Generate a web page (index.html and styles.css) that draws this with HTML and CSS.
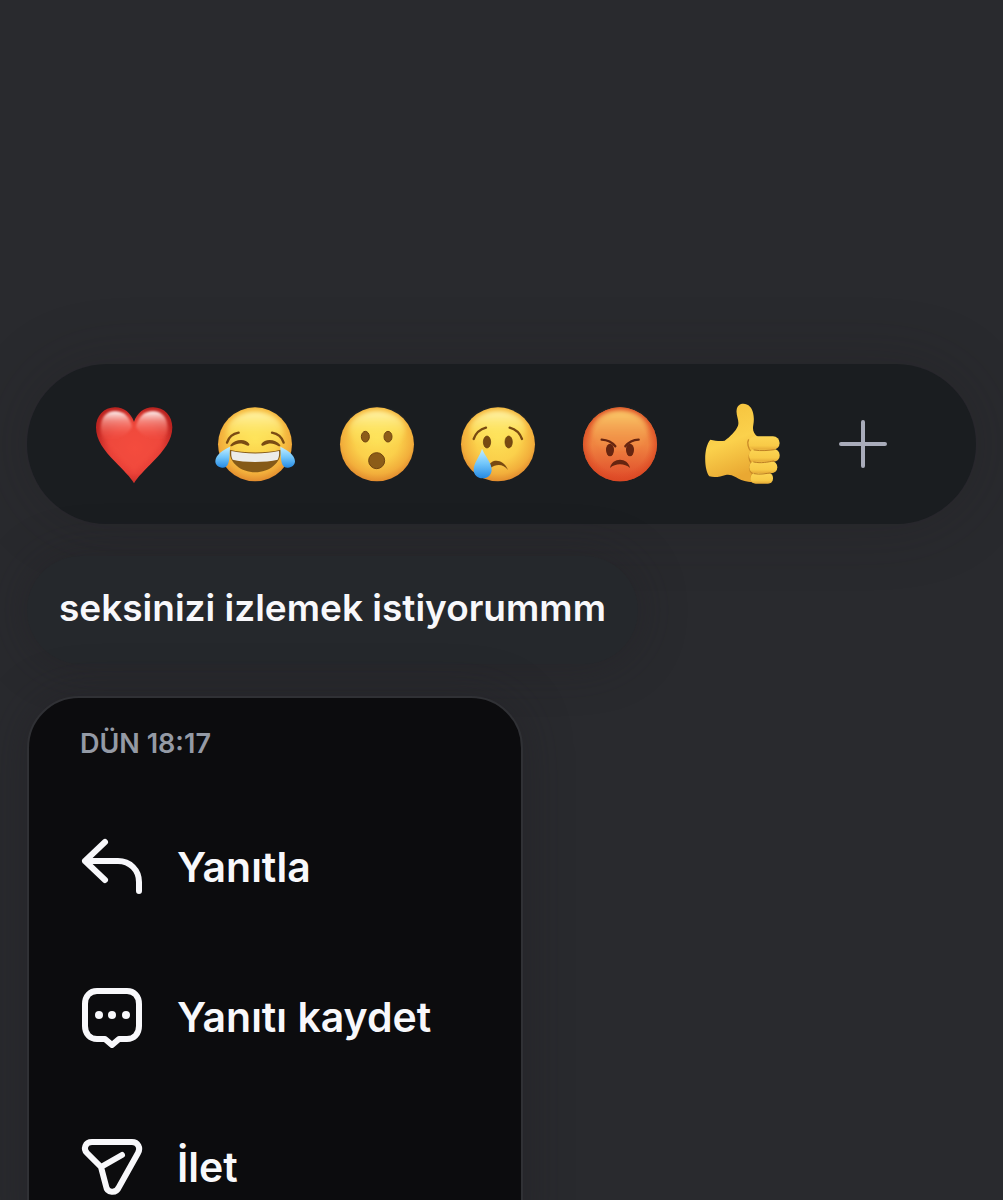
FILE: index.html
```html
<!DOCTYPE html>
<html lang="tr">
<head>
<meta charset="utf-8">
<meta name="viewport" content="width=device-width, initial-scale=1">
<title>Mesaj</title>
<link rel="stylesheet" href="styles.css">
</head>
<body>
<main class="overlay">
  <div class="reactions" role="toolbar" aria-label="Tepkiler">
    <button class="reaction" type="button" aria-label="Kalp">
      <svg class="emoji" viewBox="36 36 252 252" aria-hidden="true">
        <defs>
          <radialGradient id="heart" gradientUnits="userSpaceOnUse" cx="165" cy="175" r="125">
            <stop offset="0" stop-color="#f5493c"/><stop offset=".6" stop-color="#e94138"/><stop offset="1" stop-color="#ba2320"/>
          </radialGradient>
          <linearGradient id="gloss" x1="0" y1="0" x2="0" y2="1">
            <stop offset="0" stop-color="#fff" stop-opacity=".95"/><stop offset=".35" stop-color="#ffc4bc" stop-opacity=".5"/><stop offset="1" stop-color="#f5584c" stop-opacity="0"/>
          </linearGradient>
          <filter id="soft" x="-20%" y="-20%" width="140%" height="140%"><feGaussianBlur stdDeviation="3"/></filter>
          <filter id="softer" x="-20%" y="-20%" width="140%" height="140%"><feGaussianBlur stdDeviation="6"/></filter>
        </defs>
        <path d="M162 280C153 263 129 240 104 214C72 181 48 151 48 112C48 78 72 52 105 52C132 52 152 68 162 96C172 68 192 52 219 52C253 52 277 78 277 112C277 151 252 181 220 214C195 240 171 263 162 280Z" fill="url(#heart)"/>
        <path d="M162 250C140 225 62 165 60 112C60 82 80 64 106 64C134 64 152 84 162 108C172 84 190 64 218 64C244 64 264 82 264 112C262 165 184 225 162 250Z" fill="#f4503f" opacity=".55" filter="url(#softer)"/>
        <path d="M156 110C148 78 130 64 105 64C80 64 63 82 63 112C63 130 68 144 76 150C108 150 140 140 156 110Z" fill="url(#gloss)" filter="url(#soft)"/>
        <path d="M168 110C176 78 194 64 219 64C244 64 262 82 262 112C262 130 256 144 248 150C216 150 184 140 168 110Z" fill="url(#gloss)" filter="url(#soft)"/>
      </svg>
    </button>
    <button class="reaction" type="button" aria-label="Gülme">
      <svg class="emoji" viewBox="400 36 252 252" aria-hidden="true">
        <defs>
          <radialGradient id="face" cx=".5" cy=".42" r=".6">
            <stop offset="0" stop-color="#fddf55"/><stop offset=".5" stop-color="#fbd04b"/><stop offset=".8" stop-color="#f2ae3b"/><stop offset="1" stop-color="#de842b"/>
          </radialGradient>
          <linearGradient id="shine" x1="0" y1="0" x2="0" y2="1">
            <stop offset="0" stop-color="#fff6b4" stop-opacity=".9"/><stop offset=".6" stop-color="#fff06a" stop-opacity=".35"/><stop offset="1" stop-color="#fff06a" stop-opacity="0"/>
          </linearGradient>
          <linearGradient id="tear" x1="0" y1="0" x2="0" y2="1">
            <stop offset="0" stop-color="#c5efff"/><stop offset=".5" stop-color="#72c6fa"/><stop offset="1" stop-color="#268ae4"/>
          </linearGradient>
        </defs>
        <circle cx="526" cy="163" r="111" fill="url(#face)"/>
        <ellipse cx="526" cy="124" rx="84" ry="58" fill="url(#shine)" filter="url(#softer)"/>
        <g fill="none" stroke="#7a4b13" stroke-linecap="round">
          <path d="M442 158C447 142 460 131 477 128" stroke-width="7"/>
          <path d="M612 158C607 142 594 131 577 128" stroke-width="7"/>
        </g>
        <path d="M453 164C465 148 498 144 509 162C510 167 505 169 500 166C486 158 472 159 458 168C454 170 450 168 453 164Z" fill="#7a4b13"/>
        <path d="M601 164C589 148 556 144 545 162C544 167 549 169 554 166C568 158 582 159 596 168C600 170 604 168 601 164Z" fill="#7a4b13"/>
        <path d="M450 179C492 190 562 190 603 179C607 215 572 247 527 247C481 247 446 215 450 179Z" fill="#855a18"/>
        <path d="M455 183C496 193 557 193 598 183C599 195 598 202 594 209C558 218 494 218 459 209C455 202 454 195 455 183Z" fill="#ececea"/>
        <path d="M451 170C431 180 407 194 407 214C407 225 417 234 430 233C452 232 449 199 451 170Z" fill="url(#tear)"/>
        <path d="M602 170C622 180 646 194 646 214C646 225 636 234 623 233C601 232 604 199 602 170Z" fill="url(#tear)"/>
      </svg>
    </button>
    <button class="reaction" type="button" aria-label="Şaşırma">
      <svg class="emoji" viewBox="45 36 252 252" aria-hidden="true">
        <circle cx="171" cy="163" r="111" fill="url(#face)"/>
        <ellipse cx="171" cy="120" rx="84" ry="56" fill="url(#shine)" filter="url(#softer)"/>
        <g fill="#8c5c18" stroke="#704410" stroke-width="3">
          <ellipse cx="136" cy="140" rx="12" ry="16"/>
          <ellipse cx="204" cy="140" rx="12" ry="16"/>
          <circle cx="170" cy="212" r="24"/>
        </g>
      </svg>
    </button>
    <button class="reaction" type="button" aria-label="Üzülme">
      <svg class="emoji" viewBox="409 36 252 252" aria-hidden="true">
        <circle cx="535" cy="163" r="111" fill="url(#face)"/>
        <ellipse cx="535" cy="120" rx="84" ry="56" fill="url(#shine)" filter="url(#softer)"/>
        <g fill="#784911" stroke="#61380c" stroke-width="2">
          <ellipse cx="502" cy="156" rx="11" ry="18"/>
          <ellipse cx="567" cy="156" rx="11" ry="18"/>
        </g>
        <g fill="none" stroke="#784911" stroke-width="7" stroke-linecap="round">
          <path d="M462 147C468 130 480 118 499 113"/>
          <path d="M607 147C601 130 589 118 570 113"/>
        </g>
        <path d="M507 229C514 206 551 205 565 240C550 221 530 222 512 234Z" fill="#784911"/>
        <path d="M487 176C496 199 516 217 516 239C516 254 504 265 489 265C474 265 462 254 462 239C462 217 481 199 487 176Z" fill="url(#tear)"/>
      </svg>
    </button>
    <button class="reaction" type="button" aria-label="Kızma">
      <svg class="emoji" viewBox="24 36 252 252" aria-hidden="true">
        <defs>
          <linearGradient id="angry" x1="0" y1="0" x2="0" y2="1">
            <stop offset="0" stop-color="#ef8540"/><stop offset=".5" stop-color="#ef8441"/><stop offset="1" stop-color="#df4929"/>
          </linearGradient>
          <radialGradient id="angry-edge">
            <stop offset=".75" stop-color="#e14c26" stop-opacity="0"/><stop offset="1" stop-color="#d94822" stop-opacity=".8"/>
          </radialGradient>
          <linearGradient id="angry-shine" x1="0" y1="0" x2="0" y2="1">
            <stop offset="0" stop-color="#fbd06d" stop-opacity=".95"/><stop offset="1" stop-color="#f4a24c" stop-opacity="0"/>
          </linearGradient>
        </defs>
        <circle cx="150" cy="163" r="111" fill="url(#angry)"/>
        <circle cx="150" cy="163" r="111" fill="url(#angry-edge)"/>
        <ellipse cx="150" cy="124" rx="84" ry="62" fill="url(#angry-shine)" filter="url(#softer)"/>
        <g fill="#662510">
          <ellipse cx="120" cy="180" rx="12" ry="19"/>
          <ellipse cx="180" cy="180" rx="12" ry="19"/>
          <path d="M120 234C126 201 174 201 180 234C164 219 136 219 120 234Z"/>
        </g>
        <path d="M95 149C114 150 126 156 136 169M206 149C187 150 176 156 166 169" fill="none" stroke="#662510" stroke-width="7" stroke-linecap="round"/>
      </svg>
    </button>
    <button class="reaction" type="button" aria-label="Beğenme">
      <svg class="emoji" viewBox="389 36 252 252" aria-hidden="true">
        <defs>
          <linearGradient id="thumb" x1="0" y1="0" x2=".3" y2="1">
            <stop offset="0" stop-color="#f4c03b"/><stop offset=".55" stop-color="#fbd14c"/><stop offset="1" stop-color="#e9a832"/>
          </linearGradient>
          <linearGradient id="finger" x1="0" y1="0" x2="0" y2="1">
            <stop offset="0" stop-color="#fcd553"/><stop offset=".7" stop-color="#f8ca47"/><stop offset="1" stop-color="#e5a936"/>
          </linearGradient>
        </defs>
        <path d="M420 149C435 152 449 155 463 152C480 139 496 124 503 107C508 93 496 76 499 59C502 39 525 36 539 50C549 60 553 83 549 104C546 120 549 131 563 141L580 149L586 274C563 281 532 277 513 270C498 264 485 251 466 255C450 260 433 264 417 259C400 238 400 170 420 149Z" fill="url(#thumb)"/>
        <path d="M535 148C529 158 534 176 542 184C536 195 534 209 543 219C535 230 536 243 546 250C541 260 542 269 550 277" fill="none" stroke="#c98a28" stroke-width="4"/>
        <g fill="url(#finger)">
          <rect x="541" y="248" width="67" height="33" rx="15"/>
          <rect x="537" y="213" width="84" height="37" rx="18"/>
          <rect x="536" y="177" width="92" height="38" rx="18"/>
          <rect x="535" y="139" width="93" height="40" rx="20"/>
        </g>
        <g fill="none" stroke="#bd7f24" stroke-width="3" stroke-linecap="round">
          <path d="M551 180C573 184 596 181 612 179M550 216C573 221 592 216 610 213M551 251C570 255 588 250 600 249"/>
        </g>
      </svg>
    </button>
    <button class="reaction" type="button" aria-label="Daha fazla tepki">
      <svg class="plus" viewBox="0 0 48 48" aria-hidden="true"><path d="M2 24H46M24 2V46"/></svg>
    </button>
  </div>

  <p class="bubble">seksinizi izlemek istiyorummm</p>

  <section class="menu" aria-labelledby="sent-at">
    <h1 class="menu-time" id="sent-at">DÜN 18:17</h1>
    <button class="menu-item" type="button">
      <svg class="menu-icon" viewBox="0 0 64 64" aria-hidden="true"><path d="M25 7L5 26L25 45M5 26H38C50 26 59 35 59 47V56"/></svg>
      Yanıtla
    </button>
    <button class="menu-item" type="button">
      <svg class="menu-icon" viewBox="0 0 64 64" aria-hidden="true">
        <path d="M17 6H47C54 6 59 11 59 19V41C59 49 54 54 47 54H39L32 60L25 54H17C10 54 5 49 5 41V19C5 11 10 6 17 6Z"/>
        <g class="dots"><circle cx="19" cy="30" r="4"/><circle cx="32" cy="30" r="4"/><circle cx="46" cy="30" r="4"/></g>
      </svg>
      Yanıtı kaydet
    </button>
    <button class="menu-item" type="button">
      <svg class="menu-icon" viewBox="0 0 64 64" aria-hidden="true"><path d="M12 7H52C58 7 61 13 58 18L39 52C36 59 27 58 26 51L21 32L7 18C3 14 5 7 12 7ZM21 32L42 20"/></svg>
      İlet
    </button>
  </section>
</main>
</body>
</html>
```
FILE: styles.css
```css
* {
  box-sizing: border-box;
}

body {
  margin: 0;
  background: #292a2e;
  color: #f8f8fb;
  font-family: Inter, "Liberation Sans", sans-serif;
}

button {
  padding: 0;
  border: 0;
  background: none;
  color: inherit;
  font: inherit;
}

.overlay {
  display: flex;
  flex-direction: column;
  align-items: flex-start;
  gap: 32px;
  height: 100vh;
  padding: 364px 27px 0;
  overflow: hidden;
}

.reactions {
  display: grid;
  grid-template-columns: repeat(7, 1fr);
  flex: none;
  align-self: stretch;
  height: 160px;
  padding: 0 52px 0 46px;
  border-radius: 80px;
  background: #1a1d20;
  box-shadow: 0 0 64px rgba(32, 30, 34, 0.3);
}

.reaction {
  display: flex;
  align-items: center;
  justify-content: center;
}

.emoji {
  flex: none;
  width: 84px;
  height: 84px;
}

.plus {
  width: 48px;
  height: 48px;
  fill: none;
  stroke: #a9acba;
  stroke-width: 4;
  stroke-linecap: round;
}

.bubble {
  flex: none;
  margin: 0;
  padding: 28px 32px 32px;
  border-radius: 54px;
  background: #25282c;
  box-shadow: 0 0 48px rgba(32, 30, 34, 0.4);
  font-size: 37px;
  font-weight: 600;
  line-height: 48px;
}

.menu {
  flex: none;
  width: 496px;
  padding: 30px 51px;
  border: 2px solid #303135;
  border-radius: 52px;
  background: #0c0c0e;
  box-shadow: 0 0 48px rgba(32, 30, 34, 0.4);
}

.menu-time {
  margin: 0 0 32px;
  color: #949aa5;
  font-size: 27px;
  font-weight: 600;
  line-height: 32px;
}

.menu-item {
  display: flex;
  align-items: center;
  gap: 33px;
  width: 100%;
  height: 150px;
  font-size: 41px;
  font-weight: 600;
  text-align: left;
}

.menu-icon {
  flex: none;
  width: 64px;
  height: 64px;
  fill: none;
  stroke: currentColor;
  stroke-width: 6;
  stroke-linecap: round;
  stroke-linejoin: round;
}

.dots {
  fill: currentColor;
  stroke: none;
}
```
